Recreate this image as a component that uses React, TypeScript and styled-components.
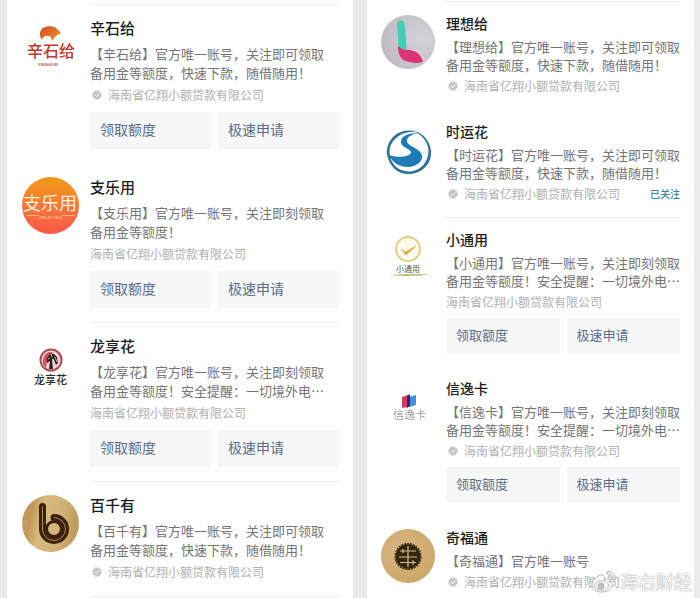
import React from "react";
import styled, { createGlobalStyle, css, ThemeProvider } from "styled-components";

interface Scale {
  avatar: number;
  title: number;
  titleLine: number;
  descLine: number;
  company: number;
  companyLine: number;
  companyGap: number;
  action: number;
  actionHeight: number;
  actionGap: number;
  padTop: number;
  padBottom: number;
  padBottomActions: number;
}

const large: Scale = {
  avatar: 57,
  title: 15,
  titleLine: 22,
  descLine: 19,
  company: 12,
  companyLine: 18,
  companyGap: 4,
  action: 14,
  actionHeight: 37,
  actionGap: 8,
  padTop: 12,
  padBottom: 15,
  padBottomActions: 14,
};

const small: Scale = {
  avatar: 54,
  title: 14,
  titleLine: 20,
  descLine: 18,
  company: 12,
  companyLine: 16,
  companyGap: 4,
  action: 13,
  actionHeight: 35,
  actionGap: 8,
  padTop: 11,
  padBottom: 15,
  padBottomActions: 13,
};

const scaled = (key: keyof Scale) => (p: { theme: any }) => `${p.theme[key]}px`;

const GlobalStyle = createGlobalStyle`
  * { box-sizing: border-box; }
  body {
    margin: 0;
    background: #ebebeb;
    font-family: "Noto Sans CJK SC", "Noto Sans", sans-serif;
  }
`;

const Page = styled.main`
  position: relative;
  display: grid;
  grid-template-columns: minmax(0, 346fr) minmax(0, 327fr);
  column-gap: 14px;
  min-height: 100vh;
  padding: 0 6px 0 7px;
`;

const Panel = styled.section<{ $top: number }>`
  background: #fefefe;
  padding: ${(p) => p.$top}px 14px 0;
`;

const Item = styled.article`
  display: flex;
  gap: 11px;
`;

const Avatar = styled.svg`
  flex: none;
  width: ${scaled("avatar")};
  height: ${scaled("avatar")};
  margin-top: 14px;
`;

const Body = styled.div<{ $line: boolean; $actions: boolean; $last: boolean }>`
  flex: 1;
  min-width: 0;
  border-top: 1px solid ${(p) => (p.$line ? "#f0f0f0" : "transparent")};
  padding-top: ${scaled("padTop")};
  padding-bottom: ${(p) => (p.$actions ? p.theme.padBottomActions : p.theme.padBottom)}px;
  ${(p) =>
    p.$last &&
    css`
      padding-bottom: 7px;
    `}
`;

const Title = styled.h2`
  margin: 0;
  font-size: ${scaled("title")};
  line-height: ${scaled("titleLine")};
  font-weight: 500;
  color: #1c1c1c;
`;

const Description = styled.p`
  margin: 5px 0 0;
  font-size: 13px;
  line-height: ${scaled("descLine")};
  color: #757575;
  white-space: pre-line;
`;

const Meta = styled.div`
  display: flex;
  align-items: center;
  margin-top: ${scaled("companyGap")};
  font-size: ${scaled("company")};
  line-height: ${scaled("companyLine")};
  color: #b0b0b0;
`;

const Badge = styled.svg`
  flex: none;
  width: 10px;
  height: 10px;
  margin: 0 6px 0 2px;
`;

const Followed = styled.button`
  margin: 0 0 0 auto;
  padding: 0;
  border: 0;
  background: none;
  font: inherit;
  font-size: 10px;
  font-weight: 500;
  color: #3a83a8;
`;

const Actions = styled.div`
  display: grid;
  grid-template-columns: 1fr 1fr;
  gap: 7px;
  margin-top: ${scaled("actionGap")};
`;

const Action = styled.button`
  height: ${scaled("actionHeight")};
  padding: 0 10px 3px;
  border: 0;
  border-radius: 2px;
  background: #f7f7f7;
  font: inherit;
  font-size: ${scaled("action")};
  color: #5b6b88;
  text-align: left;
`;

const Watermark = styled.div`
  position: absolute;
  right: 8px;
  bottom: 4px;
  display: flex;
  align-items: center;
  gap: 3px;
  font-size: 18px;
  line-height: 26px;
  color: #fdfdfd;
  text-shadow: 0 0 1px #9a9a9a, 0 0 2px #b4b4b4;
`;

const WatermarkLogo = styled.svg`
  width: 26px;
  height: 26px;
`;

const LogoText = styled.text`
  font-family: "Noto Sans CJK SC", sans-serif;
`;

const LogoCaption = styled.text`
  font-family: "Liberation Sans", sans-serif;
  font-size: 4px;
`;

const XinShi = () => (
  <Avatar viewBox="0 0 57 57" role="img" aria-label="辛石给">
    <defs>
      <linearGradient id="fox" x1="0" y1="0" x2="1" y2="1">
        <stop offset="0" stopColor="#c9481c" />
        <stop offset="1" stopColor="#f09a35" />
      </linearGradient>
    </defs>
    <path
      d="M20 22C17 18 17 12 22 9.500C27 7 34 8 36 12C38 13 39 15 38 16C36 16 35 17 33 19L30 23L28.500 18.500L25 18C22 18 20 20 20 22Z"
      fill="url(#fox)"
    />
    <LogoText x="5" y="39" fontSize="16" fontWeight="500" fill="#c0392b">辛石给</LogoText>
    <LogoCaption x="16" y="48" fontWeight="700" fill="#b9685f">XINSHIGEI</LogoCaption>
  </Avatar>
);

const ZhiLe = () => (
  <Avatar viewBox="0 0 57 57" role="img" aria-label="支乐用">
    <defs>
      <linearGradient id="sunset" x1="0" y1="0" x2="0" y2="1">
        <stop offset="0" stopColor="#ee9a14" />
        <stop offset="0.500" stopColor="#f67a37" />
        <stop offset="1" stopColor="#fb5549" />
      </linearGradient>
    </defs>
    <circle cx="28.500" cy="28.500" r="28.500" fill="url(#sunset)" />
    <LogoText x="1" y="33" fontSize="18" fill="#fff1df">支乐用</LogoText>
    <path d="M4 38.500H17M40 38.500H53" stroke="#ffc9a8" strokeWidth="0.800" />
    <LogoCaption x="17" y="42" fill="#ffd5bb">ZHILEYONG</LogoCaption>
  </Avatar>
);

const LongXiang = () => (
  <Avatar viewBox="0 0 57 57" role="img" aria-label="龙享花">
    <circle cx="29" cy="24" r="10.500" fill="#f3d3d3" stroke="#a94e55" strokeWidth="2" />
    <path d="M21 28C20 21 24 15 30 16L31 18C27 19 25 22 25 26L24 32Z" fill="#c4555d" />
    <path
      d="M25 22L28 18L32 18L35 21L36 27L34 29L32 24L31 22L30 24L31 33L27 33L28 25L25 27Z"
      fill="#2b2020"
    />
    <path d="M29 18L30 21M26 23L28 22M33 21L35 26" stroke="#f6e6e6" strokeWidth="0.800" />
    <LogoText x="12" y="48" fontSize="11" fontWeight="500" fill="#2b2b2b">龙享花</LogoText>
  </Avatar>
);

const BaiQian = () => (
  <Avatar viewBox="0 0 57 57" role="img" aria-label="百千有">
    <defs>
      <linearGradient id="brass" x1="0" y1="0" x2="1" y2="0.200">
        <stop offset="0" stopColor="#c6a163" />
        <stop offset="0.220" stopColor="#c09858" />
        <stop offset="0.400" stopColor="#d8ba7e" />
        <stop offset="0.750" stopColor="#d2b177" />
        <stop offset="1" stopColor="#c09b5e" />
      </linearGradient>
    </defs>
    <circle cx="28.500" cy="28.500" r="28.500" fill="url(#brass)" />
    <g fill="none" strokeLinecap="round">
      <path d="M20.500 11.500V34A11.500 11.500 0 1 0 32 22.500" stroke="#3b200c" strokeWidth="7" />
      <circle cx="32" cy="34" r="7.500" stroke="#3b200c" strokeWidth="3" />
      <path d="M20.500 12V34A11.500 11.500 0 1 0 32 22.500" stroke="#b08d55" strokeWidth="1" />
    </g>
  </Avatar>
);

const LiXiang = () => (
  <Avatar viewBox="0 0 54 54" role="img" aria-label="理想给">
    <defs>
      <radialGradient id="stone" cx="0.750" cy="0.450" r="0.800">
        <stop offset="0" stopColor="#d3d2d7" />
        <stop offset="1" stopColor="#bdbbc1" />
      </radialGradient>
    </defs>
    <circle cx="27" cy="27" r="27" fill="url(#stone)" />
    <path d="M16 9C16 4 23 4 24 10L25.500 34C22 35 19 34 17.500 32Z" fill="#43cdb8" />
    <path d="M17 31C20 34 24 35 28 35C35 35 39 39 42 46C39 49 34 48 29 47C21 46 17 42 17 31Z" fill="#dc3375" />
    <path d="M31 35C38 35 42 40 43 46" fill="none" stroke="#f3d5e2" strokeWidth="1" />
  </Avatar>
);

const ShiYun = () => (
  <Avatar viewBox="0 0 54 54" role="img" aria-label="时运花">
    <path
      d="M36 9C18 3 5 17 6 31C8 44 18 52 29 51C42 50 51 40 50 28C49 18 42 10 33 8C41 12 47.500 19 47.500 28C47.500 39 39 48.500 28 48.500C17 48.500 8.500 40 8.500 29C8.500 17 21 7 36 9Z"
      fill="#2c7396"
    />
    <path
      d="M38 10C27 10 20 13 20 19C20 25 31 26 30 30C28 34 16 35 8 32C12 42 24 46 33 43C43 39 43 31 37 27C31 23 25 21 26 17C27 13 32 11 38 10Z"
      fill="#1d7bb7"
    />
  </Avatar>
);

const XiaoTong = () => (
  <Avatar viewBox="0 0 54 54" role="img" aria-label="小通用">
    <circle cx="27" cy="18" r="12" fill="#fffbea" stroke="#ddd28c" strokeWidth="2" />
    <path d="M20 18L24.500 21L35 15L25 24Z" fill="#e0a443" stroke="#e0a443" strokeWidth="0.600" />
    <LogoText x="15" y="41" fontSize="8" fill="#55564c">小通用</LogoText>
    <path d="M8 44C20 43 38 43 49 43.500C38 45 20 45 8 44Z" fill="#a9ab4f" />
  </Avatar>
);

const XinYi = () => (
  <Avatar viewBox="0 0 54 54" role="img" aria-label="信逸卡">
    <path d="M21 17L27 15V27L21 28Z" fill="#dc3866" />
    <path d="M28 17L35 15V25L28 27Z" fill="#3c92e2" />
    <path d="M26 16L29 14V26L26 28Z" fill="#29266f" />
    <LogoText x="12" y="39" fontSize="11" fontWeight="300" fill="#777">信逸卡</LogoText>
  </Avatar>
);

const QiFu = () => (
  <Avatar viewBox="0 0 54 54" role="img" aria-label="奇福通">
    <defs>
      <radialGradient id="gold" cx="0.400" cy="0.400" r="0.700">
        <stop offset="0" stopColor="#d9b883" />
        <stop offset="1" stopColor="#cba568" />
      </radialGradient>
    </defs>
    <circle cx="27" cy="27" r="27" fill="url(#gold)" />
    <circle cx="27" cy="27.500" r="12.500" fill="#35260f" />
    <circle cx="27" cy="27.500" r="13" fill="none" stroke="#35260f" strokeWidth="1.200" strokeDasharray="2 1" />
    <path
      d="M27 17V38M19 22H35M18 28H36M19 33.500H35M22 20V24M32 31V36"
      fill="none"
      stroke="#d8bd8b"
      strokeWidth="1.200"
    />
  </Avatar>
);

interface Account {
  name: string;
  text: string;
  Logo: React.FC;
  verified?: boolean;
  actions?: boolean;
  followed?: boolean;
  line?: boolean;
}

const COMPANY = "海南省亿翔小额贷款有限公司";
const QUICK = "官方唯一账号，关注即可领取\n备用金等额度，快速下款，随借随用！";
const WARNING = "官方唯一账号，关注即刻领取\n备用金等额度！安全提醒：一切境外电…";

const leftAccounts: Account[] = [
  { name: "辛石给", text: QUICK, Logo: XinShi, verified: true, actions: true, line: true },
  { name: "支乐用", text: "官方唯一账号，关注即刻领取\n备用金等额度！", Logo: ZhiLe, actions: true },
  { name: "龙享花", text: WARNING, Logo: LongXiang, actions: true, line: true },
  { name: "百千有", text: QUICK, Logo: BaiQian, verified: true, line: true },
];

const rightAccounts: Account[] = [
  { name: "理想给", text: QUICK, Logo: LiXiang, verified: true, line: true },
  { name: "时运花", text: QUICK, Logo: ShiYun, verified: true, followed: true },
  { name: "小通用", text: WARNING, Logo: XiaoTong, actions: true, line: true },
  { name: "信逸卡", text: WARNING, Logo: XinYi, verified: true, actions: true },
  { name: "奇福通", text: "官方唯一账号", Logo: QiFu, verified: true },
];

const VerifiedBadge = () => (
  <Badge viewBox="0 0 10 10" aria-hidden="true">
    <circle cx="5" cy="5" r="4.300" fill="#c6c6c6" />
    <circle cx="5" cy="5" r="4.500" fill="none" stroke="#cecece" strokeDasharray="2 1.500" />
    <path d="M3 5L4.500 6.500L7.200 3.500" fill="none" stroke="#fff" strokeWidth="1" />
  </Badge>
);

const AccountItem = ({ account, last }: { account: Account; last: boolean }) => {
  const { name, text, Logo, verified, actions, followed, line } = account;
  return (
    <Item>
      <Logo />
      <Body $line={!!line} $actions={!!actions} $last={last}>
        <Title>{name}</Title>
        <Description>{`【${name}】${text}`}</Description>
        <Meta>
          {verified && <VerifiedBadge />}
          <span>{COMPANY}</span>
          {followed && <Followed type="button">已关注</Followed>}
        </Meta>
        {actions && (
          <Actions>
            <Action type="button">领取额度</Action>
            <Action type="button">极速申请</Action>
          </Actions>
        )}
      </Body>
    </Item>
  );
};

const LeftPanel = styled(Panel)`
  padding-left: 15px;
`;

const EndLine = styled.hr`
  height: 1px;
  margin: 0 0 0 68px;
  border: 0;
  background: #f0f0f0;
`;

export default function App() {
  return (
    <Page>
      <GlobalStyle />
      <ThemeProvider theme={large}>
        <LeftPanel $top={4}>
          {leftAccounts.map((a) => (
            <AccountItem key={a.name} account={a} last={false} />
          ))}
          <EndLine />
        </LeftPanel>
      </ThemeProvider>
      <ThemeProvider theme={small}>
        <Panel $top={1}>
          {rightAccounts.map((a, i) => (
            <AccountItem key={a.name} account={a} last={i === rightAccounts.length - 1} />
          ))}
        </Panel>
      </ThemeProvider>
      <Watermark>
        <WatermarkLogo viewBox="0 0 26 26" aria-hidden="true">
          <g fill="#fafafa" stroke="#b0b0b0" strokeWidth="0.900">
            <path d="M10 7C5 8 1 13 1 17C1 22 6 24 11 24C17 24 21 21 21 17C21 15 19 14 18 14C19 11 17 10 13 12C14 9 13 6 10 7Z" />
            <ellipse cx="10.500" cy="17.500" rx="7" ry="4.800" />
            <circle cx="10" cy="18" r="3" fill="#b9b9b9" />
            <circle cx="9" cy="18.500" r="1.200" />
            <path d="M16 4C21 2 26 7 24 12L22 12C23 8 20 5 16 6Z" />
            <path d="M17 8C20 7 22 9 21 12L19.500 11.500C20 10 19 9 17 9.500Z" />
          </g>
        </WatermarkLogo>
        <span>海右财经</span>
      </Watermark>
    </Page>
  );
}
